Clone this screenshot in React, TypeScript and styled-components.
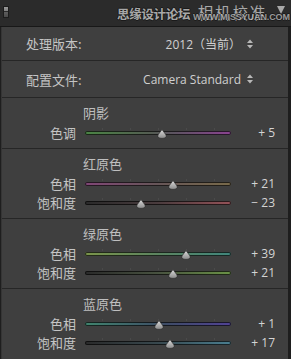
import React from "react";
import styled, { createGlobalStyle } from "styled-components";

const GlobalStyle = createGlobalStyle`
  html, body { margin: 0; padding: 0; background: #1e1e1e; }
  body {
    width: 291px; height: 359px; overflow: hidden;
    font-family: "Noto Sans CJK SC", "Noto Sans", sans-serif;
  }
`;

const Panel = styled.div`
  width: 291px;
  height: 359px;
  background: #1e1e1e;
  display: flex;
  flex-direction: column;
`;

const Header = styled.div`
  position: relative;
  height: 26px;
  background: #2b2b2b;
  border-bottom: 1px solid #181818;
  display: flex;
  align-items: center;
  padding: 0 6px 0 3px;
  flex: none;
`;

const Switch = styled.div`
  width: 6px;
  height: 12px;
  margin-top: -3px;
  box-sizing: border-box;
  border: 1px solid #1c1c1c;
  background: linear-gradient(#9a9a9a 0%, #7a7a7a 45%, #2a2a2a 45%, #2a2a2a 55%, #5c5c5c 55%, #4a4a4a 100%);
`;

const Title = styled.div`
  margin-left: auto;
  margin-top: -3px;
  font-size: 15.5px;
  letter-spacing: 1.8px;
  color: #a8a8a8;
`;

const Caret = styled.svg`
  margin-left: 10px;
  margin-top: -6px;
  flex: none;
`;

const Watermark = styled.div`
  position: absolute;
  left: 117px;
  top: 6px;
  font-size: 12.5px;
  font-weight: 700;
  line-height: 16px;
  color: #c8c8c8;
  text-shadow: 1px 0 0 #161616, -1px 0 0 #161616, 0 1px 0 #161616, 0 -1px 0 #161616;
  opacity: 0.8;
  letter-spacing: -0.3px;
`;

const WatermarkUrl = styled.div`
  position: absolute;
  left: 193px;
  top: 12px;
  font-family: "Liberation Sans", sans-serif;
  font-size: 9px;
  line-height: 11px;
  font-weight: 700;
  color: #c8c8c8;
  text-shadow: 1px 0 0 #161616, -1px 0 0 #161616, 0 1px 0 #161616, 0 -1px 0 #161616;
  opacity: 0.7;
  letter-spacing: -0.1px;
`;

const Body = styled.div`
  flex: 1;
  margin: 0 3px 0 1px;
  border-left: 1px solid #353535;
  background: #3f3f3f;
  display: flex;
  flex-direction: column;
`;

const TopRow = styled.div<{ $h: number }>`
  height: ${(p) => p.$h}px;
  display: flex;
  align-items: center;
  justify-content: space-between;
  padding: 0 35px 0 24px;
  font-size: 13px;
  color: #c4c4c4;
  flex: none;
`;

const Choice = styled.div`
  display: flex;
  align-items: center;
  gap: 6px;
  font-family: "Open Sans", "Noto Sans CJK SC", sans-serif;
  font-size: 12px;
  color: #d0d0d0;
`;

const Divider = styled.div`
  height: 1px;
  background: #262626;
  flex: none;
`;

const Section = styled.div`
  padding: 7px 0 6px;
  display: flex;
  flex-direction: column;
  gap: 2px;
  flex: none;
`;

const SectionTitle = styled.div`
  height: 16px;
  line-height: 16px;
  padding-left: 81px;
  font-size: 13px;
  color: #bfbfbf;
`;

const Rows = styled.div`
  display: flex;
  flex-direction: column;
`;

const SliderRow = styled.div`
  height: 19px;
  display: grid;
  grid-template-columns: 74px 146px 1fr;
  column-gap: 9px;
  align-items: center;
`;

const Label = styled.div`
  text-align: right;
  font-size: 13px;
  color: #c4c4c4;
  line-height: 19px;
`;

const TrackWrap = styled.div`
  position: relative;
  height: 19px;
`;

const Track = styled.div`
  position: absolute;
  left: 0;
  right: 0;
  top: 8px;
  height: 4px;
  border-radius: 2px;
  box-shadow: inset 0 0 0 1px rgba(8, 8, 8, 0.75);
`;

const Tick = styled.div`
  position: absolute;
  top: 5px;
  width: 1px;
  height: 2px;
  background: #4a4a4a;
`;

const Thumb = styled.svg`
  position: absolute;
  top: 6px;
  transform: translateX(-50%);
`;

const Value = styled.div`
  text-align: right;
  padding-right: 13px;
  font-family: "Open Sans", sans-serif;
  font-size: 12px;
  color: #d4d4d4;
  white-space: pre;
`;

const UpDown = () => (
  <svg width="6" height="10" viewBox="0 0 6 10">
    <path d="M0 4 L3 0.5 L6 4 Z M0 6 L6 6 L3 9.5 Z" fill="#b8b8b8" />
  </svg>
);

type S = { label: string; value: number; grad: string };

const ticks = [11.6, 30.8, 50, 69.2, 88.4];

const Slider = ({ label, value, grad }: S) => {
  const pct = 50 + (value / 100) * 50;
  const txt = value >= 0 ? `+ ${value}` : `\u2212 ${Math.abs(value)}`;
  return (
    <SliderRow>
      <Label>{label}</Label>
      <TrackWrap>
        {ticks.map((t) => (
          <Tick key={t} style={{ left: `${t}%` }} />
        ))}
        <Track style={{ background: grad }} />
        <Thumb width="11" height="10" viewBox="0 0 11 10" style={{ left: `${pct}%` }}>
          <defs>
            <linearGradient id="tg" x1="0" y1="0" x2="0" y2="1">
              <stop offset="0" stopColor="#dcdcdc" />
              <stop offset="1" stopColor="#8a8a8a" />
            </linearGradient>
          </defs>
          <path d="M5.5 0.5 L9.6 6 Q10.4 9.4 5.5 9.4 Q0.6 9.4 1.4 6 Z" fill="url(#tg)" stroke="#2a2a2a" strokeWidth="0.7" />
        </Thumb>
      </TrackWrap>
      <Value>{txt}</Value>
    </SliderRow>
  );
};

const sections: { title: string; rows: S[] }[] = [
  {
    title: "阴影",
    rows: [{ label: "色调", value: 5, grad: "linear-gradient(90deg,#4a8444,#545c52 45%,#5c5460 60%,#8a4290)" }],
  },
  {
    title: "红原色",
    rows: [
      { label: "色相", value: 21, grad: "linear-gradient(90deg,#804676,#665658 50%,#786a4a)" },
      { label: "饱和度", value: -23, grad: "linear-gradient(90deg,#2a2a2a,#4a3c3e 50%,#945258)" },
    ],
  },
  {
    title: "绿原色",
    rows: [
      { label: "色相", value: 39, grad: "linear-gradient(90deg,#7a944a,#5c8460 50%,#40867c)" },
      { label: "饱和度", value: 21, grad: "linear-gradient(90deg,#2a2a2a,#485240 50%,#6a9246)" },
    ],
  },
  {
    title: "蓝原色",
    rows: [
      { label: "色相", value: 1, grad: "linear-gradient(90deg,#40846e,#3e4c66 55%,#504294)" },
      { label: "饱和度", value: 17, grad: "linear-gradient(90deg,#2a2a2a,#38484e 50%,#4a7e90)" },
    ],
  },
];

export default function App() {
  return (
    <>
      <GlobalStyle />
      <Panel>
        <Header>
          <Switch />
          <Title>相机校准</Title>
          <Caret width="8" height="8" viewBox="0 0 8 8">
            <path d="M0 0 L8 0 L4 8 Z" fill="#a8a8a8" />
          </Caret>
          <Watermark>思缘设计论坛</Watermark>
          <WatermarkUrl>WWW.MISSYUAN.COM</WatermarkUrl>
        </Header>
        <Body>
          <TopRow $h={33}>
            <span>处理版本:</span>
            <Choice>
              <span>2012（当前）</span>
              <UpDown />
            </Choice>
          </TopRow>
          <Divider />
          <TopRow $h={36}>
            <span>配置文件:</span>
            <Choice>
              <span>Camera Standard</span>
              <UpDown />
            </Choice>
          </TopRow>
          {sections.map((s) => (
            <React.Fragment key={s.title}>
              <Divider />
              <Section>
                <SectionTitle>{s.title}</SectionTitle>
                <Rows>
                  {s.rows.map((r) => (
                    <Slider key={r.label} {...r} />
                  ))}
                </Rows>
              </Section>
            </React.Fragment>
          ))}
        </Body>
      </Panel>
    </>
  );
}
